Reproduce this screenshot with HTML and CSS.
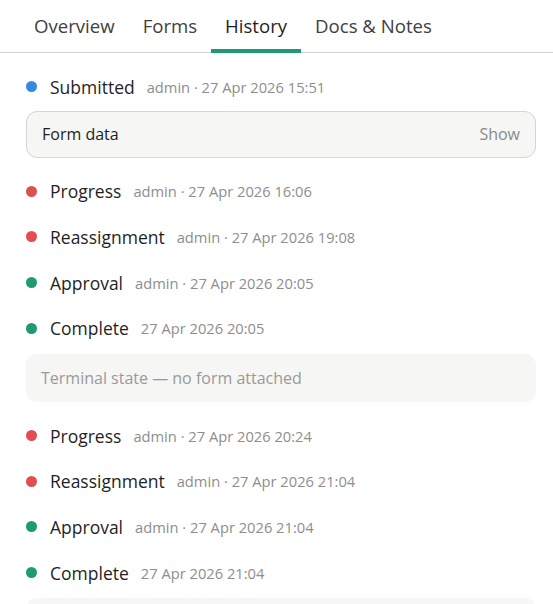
FILE: index.html
```html
<!DOCTYPE html>
<html lang="en">
<head>
<meta charset="utf-8">
<title>History</title>
<link rel="stylesheet" href="styles.css">
</head>
<body>
<nav class="tabs">
  <a class="tab">Overview</a>
  <a class="tab">Forms</a>
  <a class="tab active">History</a>
  <a class="tab">Docs &amp; Notes</a>
</nav>
<main class="history">
  <div class="event">
    <span class="dot blue"></span><span class="label">Submitted</span><span class="meta">admin · 27 Apr 2026 15:51</span>
  </div>
  <div class="detail form">
    <span>Form data</span><span class="show">Show</span>
  </div>
  <div class="event">
    <span class="dot red"></span><span class="label">Progress</span><span class="meta">admin · 27 Apr 2026 16:06</span>
  </div>
  <div class="event">
    <span class="dot red"></span><span class="label">Reassignment</span><span class="meta">admin · 27 Apr 2026 19:08</span>
  </div>
  <div class="event">
    <span class="dot green"></span><span class="label">Approval</span><span class="meta">admin · 27 Apr 2026 20:05</span>
  </div>
  <div class="event">
    <span class="dot green"></span><span class="label">Complete</span><span class="meta">27 Apr 2026 20:05</span>
  </div>
  <div class="detail terminal">Terminal state — no form attached</div>
  <div class="event">
    <span class="dot red"></span><span class="label">Progress</span><span class="meta">admin · 27 Apr 2026 20:24</span>
  </div>
  <div class="event">
    <span class="dot red"></span><span class="label">Reassignment</span><span class="meta">admin · 27 Apr 2026 21:04</span>
  </div>
  <div class="event">
    <span class="dot green"></span><span class="label">Approval</span><span class="meta">admin · 27 Apr 2026 21:04</span>
  </div>
  <div class="event">
    <span class="dot green"></span><span class="label">Complete</span><span class="meta">27 Apr 2026 21:04</span>
  </div>
  <div class="detail terminal">Terminal state — no form attached</div>
</main>
</body>
</html>
```
FILE: styles.css
```css
html, body {
  margin: 0;
  padding: 0;
  background: #ffffff;
}
body {
  font-family: "Open Sans", "Noto Sans", sans-serif;
  color: #1f1f1f;
  overflow: hidden;
}
.tabs {
  display: flex;
  padding-left: 20px;
  border-bottom: 1px solid #d4d4d4;
}
.tab {
  padding: 14px 14px 11px;
  font-size: 18.6px;
  line-height: 24px;
  color: #404040;
  border-bottom: 4px solid transparent;
  margin-bottom: -1px;
  cursor: pointer;
}
.tab.active {
  color: #1f1f1f;
  border-bottom-color: #1f9a72;
}
.history {
  padding: 11px 17px 0 26px;
}
.event {
  display: flex;
  align-items: center;
  height: 45.6px;
}
.dot {
  width: 11px;
  height: 11px;
  border-radius: 50%;
  flex: none;
  margin-right: 13px;
}
.dot.blue { background: #3a87e0; }
.dot.red { background: #e24d51; }
.dot.green { background: #1f9a72; }
.label {
  font-size: 17.5px;
  color: #1f1f1f;
  margin-right: 12px;
}
.meta {
  font-size: 14.7px;
  color: #8e8e8e;
}
.detail {
  box-sizing: border-box;
  border-radius: 11px;
  background: #f6f6f4;
  font-size: 16px;
  line-height: 25px;
  margin: 1px 0 11px;
}
.detail.form {
  display: flex;
  justify-content: space-between;
  border: 1px solid #d5d5d1;
  padding: 10px 15px;
  color: #1f1f1f;
}
.show {
  color: #8a8a8a;
}
.detail.terminal {
  padding: 12px 15px 11px;
  margin-top: 3px;
  color: #9a9a9a;
}
```
